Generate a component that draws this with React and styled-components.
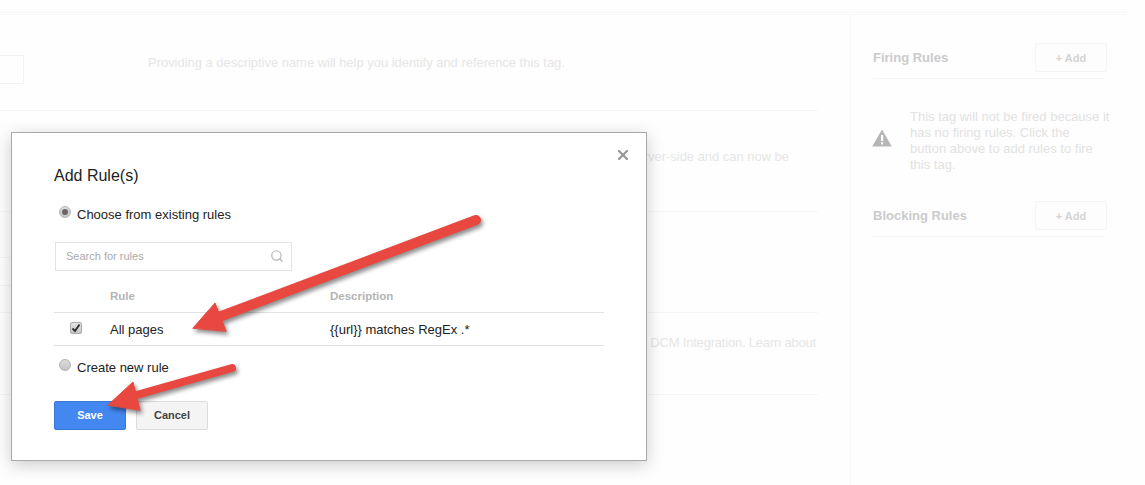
import React from "react";
import styled, { createGlobalStyle } from "styled-components";
import { Search, X } from "lucide-react";

const GlobalStyle = createGlobalStyle`
  html, body {
    margin: 0;
    background: #fefefe;
    font-family: "Liberation Sans", Arial, sans-serif;
    font-size: 13px;
  }
  * {
    box-sizing: border-box;
  }
`;

const Page = styled.div`
  position: relative;
  width: 1145px;
  height: 485px;
  overflow: hidden;
`;

const TopBar = styled.div`
  width: 1127px;
  height: 13px;
  border-bottom: 1px solid #f8f8f8;
  margin-bottom: 1px;
`;

const Body = styled.div`
  display: flex;
  width: 1127px;
  height: 471px;
  border-top: 1px solid #f6f6f6;
`;

const Main = styled.div`
  width: 818px;
  flex: none;
`;

const Row = styled.div`
  display: grid;
  grid-template-columns: 148px 1fr;
  height: ${(p) => p.$height}px;
  padding-top: ${(p) => p.$pad}px;
  border-bottom: 1px solid #f6f6f6;
`;

const NameInput = styled.div`
  width: 24px;
  height: 29px;
  border: 1px solid #f2f2f2;
  border-left: 0;
`;

const HelpText = styled.div`
  padding-right: ${(p) => p.$endGap || 0}px;
  color: #e6e6e6;
  font-size: 13px;
  line-height: 16px;
  letter-spacing: ${(p) => (p.$tight ? "-0.2px" : "-0.03px")};
  text-align: ${(p) => (p.$endGap ? "right" : "left")};
  white-space: nowrap;
`;

const MiniTable = styled.div`
  width: 148px;
  height: 29px;
  border-top: 1px solid #f4f4f4;
  border-bottom: 1px solid #f4f4f4;
`;

const Sidebar = styled.aside`
  width: 277px;
  margin-left: 32px;
  padding: 28px 20px 0 22px;
  border-left: 1px solid #f8f8f8;
`;

const RuleHead = styled.div`
  display: flex;
  align-items: center;
  justify-content: space-between;
  width: 232px;
  height: 36px;
  padding-bottom: 6px;
  border-bottom: 1px solid #f5f5f5;
`;

const RuleTitle = styled.span`
  color: #cbcbcb;
  font-size: 13px;
  font-weight: 700;
`;

const AddButton = styled.div`
  display: flex;
  align-items: center;
  justify-content: center;
  flex: none;
  width: 72px;
  height: 29px;
  margin-right: -2px;
  color: #d4d4d4;
  font-size: 11px;
  font-weight: 700;
  background: #fdfdfd;
  border: 1px solid #f5f5f5;
  border-radius: 2px;
`;

const Warning = styled.div`
  display: flex;
  align-items: flex-start;
  gap: 18px;
  height: 64px;
  margin: 30px -6px 28px -1px;
`;

const WarningIcon = styled.svg`
  flex: none;
  margin-top: 20px;
`;

const WarningText = styled.div`
  width: 204px;
  color: #e2e2e2;
  font-size: 13px;
  line-height: 16px;
`;

const Modal = styled.div`
  position: absolute;
  top: 132px;
  left: 11px;
  width: 636px;
  height: 329px;
  padding: 33px 42px 0;
  background: #fff;
  border: 1px solid #a9a9a9;
  box-shadow: 0 4px 16px rgba(0, 0, 0, 0.2);
`;

const Close = styled.div`
  position: absolute;
  top: 14px;
  right: 15px;
  display: flex;
  color: #999;
`;

const Title = styled.h2`
  margin: 0 0 20px;
  color: #222;
  font-size: 16px;
  font-weight: 400;
  line-height: 20px;
`;

const RadioRow = styled.label`
  display: flex;
  align-items: center;
  gap: 6px;
  height: 16px;
  padding-left: 5px;
  color: #222;
  font-size: 13px;
`;

const Radio = styled.span`
  display: flex;
  align-items: center;
  justify-content: center;
  width: 12px;
  height: 12px;
  margin-top: -4px;
  background: linear-gradient(#dcdcdc, #c4c4c4);
  border: 1px solid #b4b4b4;
  border-radius: 50%;

  &::after {
    content: "";
    display: ${(p) => (p.$checked ? "block" : "none")};
    width: 6px;
    height: 6px;
    background: #666;
    border-radius: 50%;
  }
`;

const SearchBox = styled.div`
  display: flex;
  align-items: center;
  justify-content: space-between;
  width: 237px;
  height: 29px;
  margin: 20px 0 0 1px;
  padding: 0 7px 1px 10px;
  color: #aaa;
  font-size: 11px;
  border: 1px solid #e4e4e4;
`;

const TableRow = styled.div`
  display: grid;
  grid-template-columns: 56px 220px 1fr;
  align-items: center;
  width: 550px;
  height: ${(p) => p.$height}px;
  padding-top: ${(p) => p.$pad || 0}px;
  color: ${(p) => (p.$head ? "#b4b4b4" : "#222")};
  font-size: ${(p) => (p.$head ? "11.5px" : "13px")};
  font-weight: ${(p) => (p.$head ? 700 : 400)};
  border-bottom: 1px solid #e2e2e2;
`;

const Checkbox = styled.span`
  display: flex;
  align-items: center;
  justify-content: center;
  width: 12px;
  height: 12px;
  margin: -3px 0 0 16px;
  background: linear-gradient(#e4e4e4, #c8c8c8);
  border: 1px solid #aaa;
  border-radius: 2px;
`;

const CreateRow = styled(RadioRow)`
  margin-top: 13px;
`;

const Actions = styled.div`
  display: flex;
  gap: 10px;
  margin-top: 26px;
`;

const Button = styled.button`
  width: 72px;
  height: 29px;
  padding: 0 0 1px;
  color: ${(p) => (p.$primary ? "#fff" : "#444")};
  font-family: inherit;
  font-size: 11px;
  font-weight: 700;
  background: ${(p) => (p.$primary ? "#4387f0" : "#f4f4f4")};
  border: 1px solid ${(p) => (p.$primary ? "#3a78d8" : "#dcdcdc")};
  border-radius: 2px;
`;

const Arrows = styled.svg`
  position: absolute;
  top: 0;
  left: 0;
  filter: drop-shadow(2px 3px 2px rgba(0, 0, 0, 0.45));
  pointer-events: none;
`;

function App() {
  return (
    <Page>
      <GlobalStyle />
      <TopBar />
      <Body>
        <Main>
          <Row $height={96} $pad={40}>
            <NameInput />
            <HelpText>
              Providing a descriptive name will help you identify and reference this tag.
            </HelpText>
          </Row>
          <Row $height={101} $pad={38}>
            <div />
            <HelpText $endGap={29}>server-side and can now be</HelpText>
          </Row>
          <Row $height={101} $pad={45}>
            <MiniTable />
            <div />
          </Row>
          <Row $height={82} $pad={22}>
            <div />
            <HelpText $endGap={2} $tight>
              DCM Integration. Learn about
            </HelpText>
          </Row>
        </Main>
        <Sidebar>
          <RuleHead>
            <RuleTitle>Firing Rules</RuleTitle>
            <AddButton>+ Add</AddButton>
          </RuleHead>
          <Warning>
            <WarningIcon width="20" height="18" viewBox="0 0 20 18">
              <path d="M10 0.5 L19.8 17.5 H0.2 Z" fill="#b6b6b6" />
              <rect x="9" y="6" width="2.2" height="6" fill="#fff" />
              <rect x="9" y="13.2" width="2.2" height="2.2" fill="#fff" />
            </WarningIcon>
            <WarningText>
              This tag will not be fired because it
              <br />
              has no firing rules. Click the
              <br />
              button above to add rules to fire
              <br />
              this tag.
            </WarningText>
          </Warning>
          <RuleHead>
            <RuleTitle>Blocking Rules</RuleTitle>
            <AddButton>+ Add</AddButton>
          </RuleHead>
        </Sidebar>
      </Body>

      <Modal>
        <Close>
          <X size={16} strokeWidth={3.5} />
        </Close>
        <Title>Add Rule(s)</Title>
        <RadioRow>
          <Radio $checked />
          Choose from existing rules
        </RadioRow>
        <SearchBox>
          Search for rules
          <Search size={14} color="#b4b4b4" />
        </SearchBox>
        <TableRow $head $height={42} $pad={9}>
          <span />
          <span>Rule</span>
          <span>Description</span>
        </TableRow>
        <TableRow $height={33}>
          <Checkbox>
            <svg width="10" height="10" viewBox="0 0 10 10">
              <path d="M1.5 5.5 L4 8 L8.5 1.5" fill="none" stroke="#333" strokeWidth="2" />
            </svg>
          </Checkbox>
          <span>All pages</span>
          <span>{"{{url}} matches RegEx .*"}</span>
        </TableRow>
        <CreateRow>
          <Radio />
          Create new rule
        </CreateRow>
        <Actions>
          <Button $primary>Save</Button>
          <Button>Cancel</Button>
        </Actions>
      </Modal>

      <Arrows width="1145" height="485" viewBox="0 0 1145 485">
        <g fill="#e8483f" stroke="#e8483f" strokeLinecap="round" strokeLinejoin="round">
          <line x1="476" y1="220" x2="216" y2="318" strokeWidth="10" />
          <path d="M193 328 L215 303 L226 331 Z" strokeWidth="1" />
          <line x1="232" y1="368" x2="133" y2="396" strokeWidth="8" />
          <path d="M108 405 L133 382 L140 410 Z" strokeWidth="1" />
        </g>
      </Arrows>
    </Page>
  );
}

export default App;
